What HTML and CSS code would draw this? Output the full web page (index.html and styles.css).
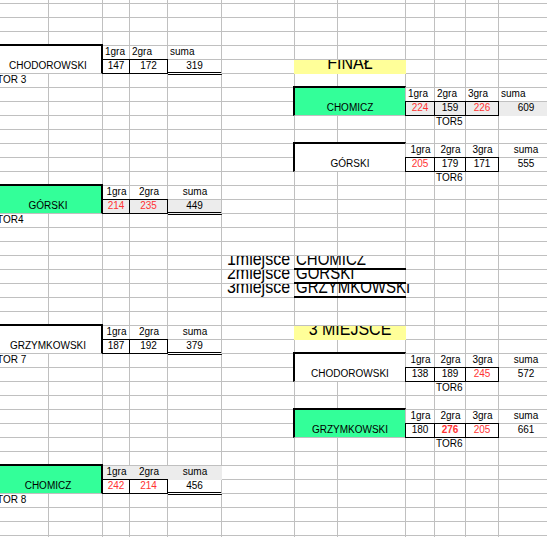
FILE: index.html
```html
<!DOCTYPE html>
<html lang="pl">
<head>
<meta charset="utf-8">
<title>Turniej</title>
<link rel="stylesheet" href="styles.css">
</head>
<body>
<div class="sheet">

  <div class="card card-l row5 hd-left">
    <div class="cell name">CHODOROWSKI</div>
    <div class="cell hd">1gra</div>
    <div class="cell hd">2gra</div>
    <div class="cell hd">suma</div>
    <div class="cell score">147</div>
    <div class="cell score">172</div>
    <div class="cell total">319</div>
    <div class="cell tor">TOR 3</div>
  </div>

  <div class="cell banner row6b"><span class="tall">FINAŁ</span></div>

  <div class="card card-r row8 hd-left">
    <div class="cell name green">CHOMICZ</div>
    <div class="cell hd">1gra</div>
    <div class="cell hd">2gra</div>
    <div class="cell hd">3gra</div>
    <div class="cell hd">suma</div>
    <div class="cell score shade red">224</div>
    <div class="cell score shade">159</div>
    <div class="cell score shade red">226</div>
    <div class="cell total shade">609</div>
    <div class="cell tor">TOR5</div>
  </div>

  <div class="card card-r row12">
    <div class="cell name">GÓRSKI</div>
    <div class="cell hd">1gra</div>
    <div class="cell hd">2gra</div>
    <div class="cell hd">3gra</div>
    <div class="cell hd">suma</div>
    <div class="cell score red">205</div>
    <div class="cell score">179</div>
    <div class="cell score">171</div>
    <div class="cell total">555</div>
    <div class="cell tor">TOR6</div>
  </div>

  <div class="card card-l row15">
    <div class="cell name green">GÓRSKI</div>
    <div class="cell hd">1gra</div>
    <div class="cell hd">2gra</div>
    <div class="cell hd">suma</div>
    <div class="cell score shade red">214</div>
    <div class="cell score shade red">235</div>
    <div class="cell total shade">449</div>
    <div class="cell tor">TOR4</div>
  </div>

  <div class="podium">
    <div class="cell place"><span class="tall">1miejsce</span></div>
    <div class="cell winner"><span class="tall">CHOMICZ</span></div>
    <div class="cell place"><span class="tall">2miejsce</span></div>
    <div class="cell winner"><span class="tall">GÓRSKI</span></div>
    <div class="cell place"><span class="tall">3miejsce</span></div>
    <div class="cell winner"><span class="tall">GRZYMKOWSKI</span></div>
  </div>

  <div class="card card-l row25">
    <div class="cell name">GRZYMKOWSKI</div>
    <div class="cell hd">1gra</div>
    <div class="cell hd">2gra</div>
    <div class="cell hd">suma</div>
    <div class="cell score">187</div>
    <div class="cell score">192</div>
    <div class="cell total">379</div>
    <div class="cell tor">TOR 7</div>
  </div>

  <div class="cell banner row25b"><span class="tall">3 MIEJSCE</span></div>

  <div class="card card-r row27">
    <div class="cell name">CHODOROWSKI</div>
    <div class="cell hd">1gra</div>
    <div class="cell hd">2gra</div>
    <div class="cell hd">3gra</div>
    <div class="cell hd">suma</div>
    <div class="cell score">138</div>
    <div class="cell score">189</div>
    <div class="cell score red">245</div>
    <div class="cell total">572</div>
    <div class="cell tor">TOR6</div>
  </div>

  <div class="card card-r row31">
    <div class="cell name green">GRZYMKOWSKI</div>
    <div class="cell hd">1gra</div>
    <div class="cell hd">2gra</div>
    <div class="cell hd">3gra</div>
    <div class="cell hd">suma</div>
    <div class="cell score">180</div>
    <div class="cell score red strong">276</div>
    <div class="cell score red">205</div>
    <div class="cell total">661</div>
    <div class="cell tor">TOR6</div>
  </div>

  <div class="card card-l row35">
    <div class="cell name green">CHOMICZ</div>
    <div class="cell hd shade">1gra</div>
    <div class="cell hd shade">2gra</div>
    <div class="cell hd shade">suma</div>
    <div class="cell score red">242</div>
    <div class="cell score red">214</div>
    <div class="cell total">456</div>
    <div class="cell tor">TOR 8</div>
  </div>

</div>
</body>
</html>
```

FILE: styles.css
```css
* {
  box-sizing: border-box;
}

html,
body {
  margin: 0;
  background: #fff;
}

body {
  width: 547px;
  height: 537px;
  overflow: hidden;
  font-family: "Liberation Sans", Arial, sans-serif;
}

/* spreadsheet canvas: columns A..L, 14px rows, grey gridlines */
.sheet {
  display: grid;
  grid-template-columns: 54px 54px 27px 38px 54px 73px 43px 68px 29px 31px 33px 54px;
  grid-template-rows: repeat(40, 14px);
  width: 558px;
  margin: -10px 0 0 -5px;
  font-size: 10px;
  line-height: 11px;
  color: #000;
  background-color: #fff;
  background-image:
    linear-gradient(#c0c0c0, #c0c0c0),
    linear-gradient(#c0c0c0, #c0c0c0),
    linear-gradient(#c0c0c0, #c0c0c0),
    linear-gradient(#c0c0c0, #c0c0c0),
    linear-gradient(#c0c0c0, #c0c0c0),
    linear-gradient(#c0c0c0, #c0c0c0),
    linear-gradient(#c0c0c0, #c0c0c0),
    linear-gradient(#c0c0c0, #c0c0c0),
    linear-gradient(#c0c0c0, #c0c0c0),
    linear-gradient(#c0c0c0, #c0c0c0),
    linear-gradient(#c0c0c0, #c0c0c0),
    linear-gradient(#c0c0c0, #c0c0c0),
    repeating-linear-gradient(to bottom, transparent 0 13px, #c0c0c0 13px 14px);
  background-size:
    1px 100%, 1px 100%, 1px 100%, 1px 100%, 1px 100%, 1px 100%,
    1px 100%, 1px 100%, 1px 100%, 1px 100%, 1px 100%, 1px 100%,
    100% 100%;
  background-position:
    53px 0, 107px 0, 134px 0, 172px 0, 226px 0, 299px 0,
    342px 0, 410px 0, 439px 0, 470px 0, 503px 0, 557px 0,
    0 0;
  background-repeat: no-repeat;
}

.cell {
  padding: 0 2px;
  white-space: nowrap;
}

/* player cards */
.card {
  display: grid;
  grid-template-rows: repeat(3, 14px);
}

.card-l {
  grid-column: 1 / 6;
  grid-template-columns: 108px 27px 38px 54px;
}

.card-r {
  grid-column: 7 / 13;
  grid-template-columns: 111px 29px 31px 33px 54px;
}

.row5 { grid-row: 5 / span 3; }
.row8 { grid-row: 8 / span 3; }
.row12 { grid-row: 12 / span 3; }
.row15 { grid-row: 15 / span 3; }
.row25 { grid-row: 25 / span 3; }
.row27 { grid-row: 27 / span 3; }
.row31 { grid-row: 31 / span 3; }
.row35 { grid-row: 35 / span 3; }

.name {
  grid-row: 1 / 3;
  grid-column: 1;
  margin-top: -2px;
  padding-top: 14px;
  text-align: center;
  background-color: #fff;
  border-top: 2px solid #000;
  border-bottom: 1px solid #c0c0c0;
}

.card-l .name {
  border-right: 2px solid #000;
}

.card-r .name {
  margin-left: -2px;
  border-left: 2px solid #000;
  border-right: 1px solid #c0c0c0;
}

.card .name.green {
  background-color: #33ff99;
}

.hd {
  text-align: center;
}

.hd-left .hd {
  text-align: left;
}

.score {
  margin: -1px 0 0 -1px;
  border: 1px solid #000;
  text-align: center;
}

.total {
  text-align: center;
}

.card-l .total {
  margin-bottom: -1px;
  background-color: #fff;
  border-right: 1px solid #c0c0c0;
  border-bottom: 3px double #000;
}

.shade,
.card-l .total.shade {
  background-color: #ececec;
}

.tor {
  grid-row: 3;
  grid-column: 1;
}

.card-r .tor {
  grid-column: 3;
  padding-left: 1px;
}

.red {
  color: #ff3333;
}

.strong {
  font-weight: bold;
}

/* large labels: taller glyphs, clipped at the row top like the sheet */
.tall {
  display: inline-block;
  transform: scaleY(1.2);
  transform-origin: 50% 9.5px;
}

/* yellow section titles */
.banner {
  grid-column: 7 / 9;
  margin-left: -1px;
  background: #ffff99;
  font-size: 16px;
  line-height: 8px;
  text-align: center;
  overflow-x: visible;
  overflow-y: clip;
}

.row6b { grid-row: 6; }
.row25b { grid-row: 25; }

/* final standings */
.podium {
  grid-column: 6 / 9;
  grid-row: 20 / span 3;
  display: grid;
  grid-template-columns: 73px 111px;
  grid-template-rows: repeat(3, 14px);
}

.place {
  font-size: 16px;
  line-height: 8px;
  text-align: center;
  overflow-x: visible;
  overflow-y: clip;
}

.winner {
  margin-left: -1px;
  padding-left: 2px;
  font-size: 15px;
  line-height: 8px;
  border-bottom: 2px solid #000;
  overflow-x: visible;
  overflow-y: clip;
}

.winner .tall {
  transform-origin: 50% 9.2px;
}
```
